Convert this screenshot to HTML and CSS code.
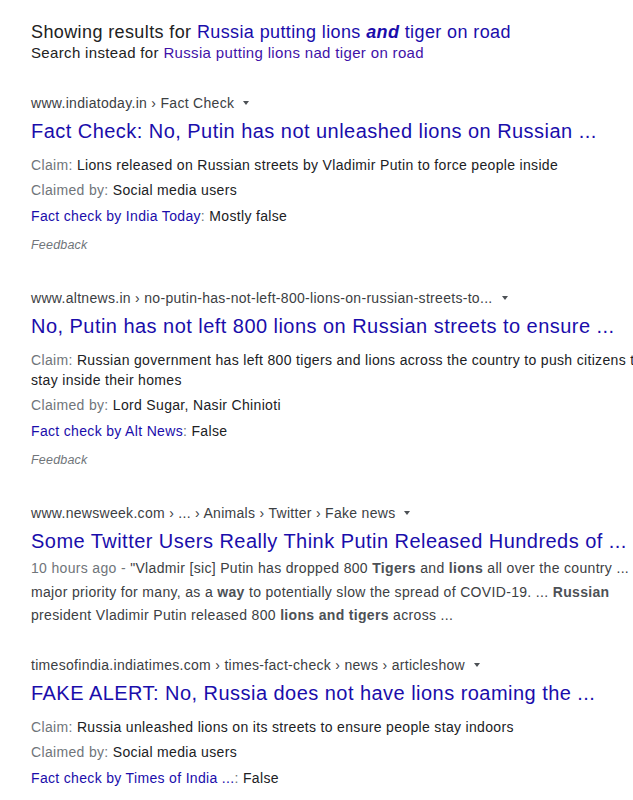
FILE: index.html
```html
<!DOCTYPE html>
<html lang="en">
<head>
<meta charset="utf-8">
<title>Search results</title>
<link rel="stylesheet" href="styles.css">
</head>
<body>
<div class="page">
  <div class="spell">
    <p class="showing">Showing results for <a class="link" href="#">Russia putting lions <b><i>and</i></b> tiger on road</a></p>
    <p class="instead">Search instead for <a class="link alt" href="#">Russia putting lions nad tiger on road</a></p>
  </div>

  <div class="result">
    <div class="url">www.indiatoday.in › Fact Check <span class="caret"></span></div>
    <a class="title" href="#">Fact Check: No, Putin has not unleashed lions on Russian ...</a>
    <div class="claim"><span class="label">Claim: </span>Lions released on Russian streets by Vladimir Putin to force people inside</div>
    <div class="row"><span class="label">Claimed by: </span>Social media users</div>
    <div class="row"><a class="link" href="#">Fact check by India Today</a><span class="label">:</span> Mostly false</div>
    <div class="feedback">Feedback</div>
  </div>

  <div class="result">
    <div class="url">www.altnews.in › no-putin-has-not-left-800-lions-on-russian-streets-to... <span class="caret"></span></div>
    <a class="title" href="#">No, Putin has not left 800 lions on Russian streets to ensure ...</a>
    <div class="claim"><span class="label">Claim: </span>Russian government has left 800 tigers and lions across the country to push citizens to stay inside their homes</div>
    <div class="row"><span class="label">Claimed by: </span>Lord Sugar, Nasir Chinioti</div>
    <div class="row"><a class="link" href="#">Fact check by Alt News</a><span class="label">:</span> False</div>
    <div class="feedback">Feedback</div>
  </div>

  <div class="result">
    <div class="url">www.newsweek.com › ... › Animals › Twitter › Fake news <span class="caret"></span></div>
    <a class="title" href="#">Some Twitter Users Really Think Putin Released Hundreds of ...</a>
    <div class="snippet"><span class="label">10 hours ago - </span>"Vladmir [sic] Putin has dropped 800 <b>Tigers</b> and <b>lions</b> all over the country ... major priority for many, as a <b>way</b> to potentially slow the spread of COVID-19. ... <b>Russian</b> president Vladimir Putin released 800 <b>lions and tigers</b> across ...</div>
  </div>

  <div class="result last">
    <div class="url">timesofindia.indiatimes.com › times-fact-check › news › articleshow <span class="caret"></span></div>
    <a class="title" href="#">FAKE ALERT: No, Russia does not have lions roaming the ...</a>
    <div class="claim"><span class="label">Claim: </span>Russia unleashed lions on its streets to ensure people stay indoors</div>
    <div class="row"><span class="label">Claimed by: </span>Social media users</div>
    <div class="row"><a class="link" href="#">Fact check by Times of India ...</a><span class="label">:</span> False</div>
  </div>
</div>
</body>
</html>
```

FILE: styles.css
```css
html, body {
  margin: 0;
  padding: 0;
  background: #fff;
  overflow: hidden;
}

body {
  font-family: "Liberation Sans", Arial, sans-serif;
  color: #202124;
}

.page {
  padding: 21px 0 0 31px;
  width: 620px;
}

.spell p {
  margin: 0;
}

.showing {
  font-size: 18px;
  line-height: 22px;
  letter-spacing: 0.39px;
  color: #222;
}

.instead {
  font-size: 15px;
  line-height: 20px;
  letter-spacing: 0.34px;
  color: #222;
}

.link {
  color: #1a0dab;
  text-decoration: none;
}

.link.alt {
  color: #3f12a8;
}

.result {
  margin-top: 30px;
}

.result.last {
  margin-top: 27px;
}

.url {
  font-size: 14px;
  line-height: 20px;
  letter-spacing: 0.3px;
  color: #3c4043;
  white-space: nowrap;
  display: flex;
  align-items: center;
  gap: 9px;
}

.caret {
  display: inline-block;
  width: 0;
  height: 0;
  border-left: 3.5px solid transparent;
  border-right: 3.5px solid transparent;
  border-top: 4px solid #4d5156;
}

.title {
  display: block;
  margin-top: 5px;
  font-size: 20px;
  line-height: 26px;
  letter-spacing: 0.46px;
  color: #1a0dab;
  text-decoration: none;
  white-space: nowrap;
}

.claim {
  margin-top: 8px;
  font-size: 14px;
  line-height: 20px;
  letter-spacing: 0.33px;
  padding: 3px 0 2px;
  color: #202124;
}

.row {
  font-size: 14px;
  line-height: 26px;
  letter-spacing: 0.33px;
  color: #202124;
  white-space: nowrap;
}

.label {
  color: #70757a;
}

.feedback {
  margin-top: 3px;
  font-size: 12.5px;
  line-height: 26px;
  letter-spacing: 0.2px;
  font-style: italic;
  color: #70757a;
}

.snippet {
  margin-top: 3px;
  font-size: 14px;
  line-height: 23.5px;
  letter-spacing: 0.33px;
  color: #3c4043;
}

.snippet b {
  color: #4d5156;
  font-weight: bold;
}
```
